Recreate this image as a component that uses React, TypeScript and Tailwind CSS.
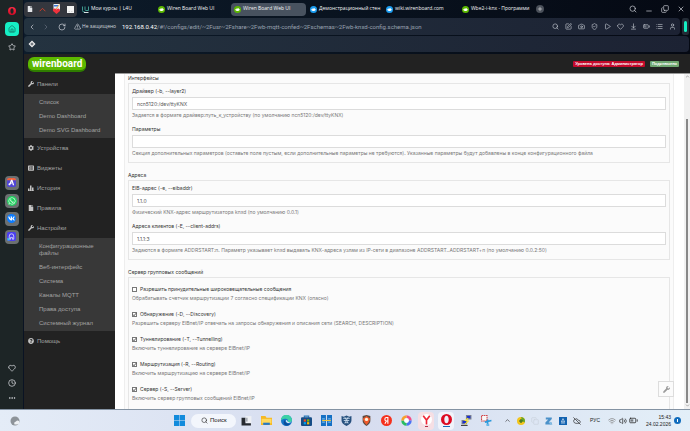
import type { ComponentType, ReactNode } from 'react';
import {
    ArrowDownToLine,
    BatteryMedium,
    Camera,
    ChevronDown,
    ChevronLeft,
    ChevronRight,
    ChevronUp,
    Clock4,
    CloudOff,
    Copy,
    Ellipsis,
    Heart,
    House,
    List,
    Minus,
    Play,
    Plus,
    RotateCw,
    Search,
    ShieldCheck,
    SquarePen,
    Star,
    TriangleAlert,
    User,
    Volume2,
    Wifi,
    X,
} from 'lucide-react';
import {
    FaCog,
    FaFile,
    FaListAlt,
    FaQuestionCircle,
    FaVk,
    FaWhatsapp,
    FaWrench,
} from 'react-icons/fa';
import clsx from 'clsx';

type Icon = ComponentType<{ className?: string }>;

/* ---------- Logos ---------- */

function BoardIcon({ color }: { color: string }) {
    return (
        <svg viewBox="0 0 14 14" className="size-[7px] shrink-0">
            <circle cx="7" cy="7" r="7" fill={color} />
            <path d="M2.5 6.5h2l1-2h1l1 1 1-1h1l.7 2h1.3v2H9.5v1.5h-5V8.500h-2z" fill="#fff" />
        </svg>
    );
}

function OperaIcon({ className }: { className?: string }) {
    return (
        <svg viewBox="0 0 20 20" className={className}>
            <defs>
                <linearGradient id="opera" x1="0" y1="0" x2="0" y2="1">
                    <stop offset="0" stopColor="#ff2b44" />
                    <stop offset="1" stopColor="#d00a24" />
                </linearGradient>
            </defs>
            <path
                fill="url(#opera)"
                fillRule="evenodd"
                d="M10 0a10 10 0 1 0 0 20a10 10 0 1 0 0-20zM10 3c2.500 0 4 3.200 4 7s-1.500 7-4 7-4-3.200-4-7 1.500-7 4-7z"
            />
        </svg>
    );
}

function CoursesIcon() {
    return (
        <svg viewBox="0 0 14 14" className="size-[7px] shrink-0">
            <path d="M1 1v8q0 3 3 3h2M6 1v6q0 2 2 2h5V1" fill="none" stroke="#3f9a90" strokeWidth="2" />
            <path d="M4 13h9" stroke="#d6e4e4" strokeWidth="2" />
        </svg>
    );
}

function PlayerIcon({ className }: { className?: string }) {
    return (
        <svg viewBox="0 0 20 20" className={className}>
            <rect width="20" height="20" rx="4" fill="#4a3df0" />
            <path d="M5 16V9a5 5 0 0 1 10 0v7h-3v-4H8v4z" fill="none" stroke="#fff" strokeWidth="1.500" />
            <path d="M1 13l5 2v4H1z" fill="#38c6ee" />
        </svg>
    );
}

function AriaIcon({ className }: { className?: string }) {
    return (
        <svg viewBox="0 0 20 20" className={className}>
            <rect width="20" height="20" rx="4" fill="#4f45d6" />
            <path d="M0 4q0-4 4-4h12q4 0 4 4v1H0z" fill="#f0643c" />
            <path d="M4 16l5-12h3l4 12h-3l-2.500-8-3.500 8z" fill="#fff" />
            <path d="M3 14l8-3" stroke="#fff" strokeWidth="2" />
        </svg>
    );
}

function BarsIcon({ className }: { className?: string }) {
    return (
        <svg viewBox="0 0 12 12" fill="currentColor" className={className}>
            <path d="M0 7h3v4H0zM4 1h3v10H4zM8 5h3v6H8zM0 11h12v1H0z" />
        </svg>
    );
}

/* ---------- Browser ---------- */

const messengers = [
    { name: 'Aria', node: <AriaIcon className="size-[9px]" /> },
    {
        name: 'WhatsApp',
        node: (
            <span className="grid size-[10px] place-items-center rounded-full bg-[#1fd05f] text-white">
                <FaWhatsapp className="size-2" />
            </span>
        ),
    },
    {
        name: 'VK',
        node: (
            <span className="grid size-[9px] place-items-center rounded-full bg-[#0a7cff] text-white">
                <FaVk className="size-[7px]" />
            </span>
        ),
    },
    { name: 'Плеер', node: <PlayerIcon className="size-[9px]" /> },
];

function Rail() {
    return (
        <nav aria-label="Боковая панель" className="flex w-[23px] shrink-0 flex-col items-center bg-[#1d2526] text-gray-200">
            <button aria-label="Opera" className="mt-[7px]">
                <OperaIcon className="size-2" />
            </button>
            <button aria-label="Рабочее пространство" className="mt-[7px] grid size-[14px] place-items-center rounded-sm bg-[#15efc4] text-[#125f55]">
                <House className="size-2" />
            </button>
            <button aria-label="Закладки" className="mt-[7px]">
                <Star className="size-2" />
            </button>
            <div className="my-auto flex flex-col gap-1 pt-1">
                {messengers.map((m) => (
                    <button key={m.name} aria-label={m.name} className="grid size-[14px] place-items-center rounded-sm bg-[#6b7071]">
                        {m.node}
                    </button>
                ))}
            </div>
            <div className="flex flex-col items-center gap-[7px] pb-[7px]">
                <button aria-label="Избранное"><Heart className="size-2" /></button>
                <button aria-label="История"><Clock4 className="size-2" /></button>
                <button aria-label="Ещё"><Ellipsis className="size-2" /></button>
            </div>
        </nav>
    );
}

const tabs = [
    { title: 'Мои курсы | L4U', icon: <CoursesIcon /> },
    { title: 'Wiren Board Web UI', icon: <BoardIcon color="#5cb800" /> },
    { title: 'Wiren Board Web UI', icon: <BoardIcon color="#5cb800" />, active: true },
    { title: 'Демонстрационный стен', icon: <BoardIcon color="#1b9df0" /> },
    { title: 'wiki.wirenboard.com', icon: <BoardIcon color="#1b9df0" /> },
    { title: 'Wbe2-i-knx - Программи', icon: <BoardIcon color="#5cb800" /> },
];

function PinnedTabs() {
    return (
        <div className="flex h-[15px] w-[53px] shrink-0 items-center justify-around rounded-sm bg-[#34373e]">
            <FaFile className="size-[6px] text-gray-200" />
            <svg viewBox="0 0 12 12" className="size-[7px]">
                <path d="M1 9l5-5 5 5" fill="none" stroke="#d8402a" strokeWidth="1.500" />
            </svg>
            <svg viewBox="0 0 18 24" className="h-3 w-[9px]">
                <rect x="3" y="2" width="13" height="13" fill="#e8eef8" />
                <path d="M4 4h8v3H4z" fill="#3c78d8" />
                <path d="M15 3l-7 9" stroke="#e8a33c" strokeWidth="2" />
                <path d="M9 22l-7-6q-1-5 3-5 3 0 4 2 1-2 4-2 4 1 3 5z" fill="#f0323c" />
            </svg>
            <svg viewBox="0 0 14 14" className="size-[7px]">
                <path d="M0 0h14v14H0z" fill="#f4f4f4" />
                <path d="M3 11h3M8 11h3" stroke="#b8b8b8" />
            </svg>
        </div>
    );
}

function TabStrip() {
    return (
        <div className="flex h-[18px] shrink-0 items-center gap-px">
            <PinnedTabs />
            <div className="ml-px flex gap-px" role="tablist">
                {tabs.map((tab, i) => (
                    <button
                        key={i}
                        role="tab"
                        aria-selected={!!tab.active}
                        className={clsx(
                            'flex h-[13px] w-[75px] items-center gap-[2px] rounded-sm pl-[3px] text-left text-[5px] text-gray-100',
                            tab.active && 'bg-[#48525f]'
                        )}
                    >
                        {tab.icon}
                        <span className="whitespace-nowrap">{tab.title}</span>
                    </button>
                ))}
            </div>
            <button aria-label="Новая вкладка" className="ml-px grid size-2 place-items-center rounded-full bg-[#4a505a] text-white">
                <Plus className="size-[6px]" />
            </button>
            <div className="ml-auto flex items-center gap-2 pr-1 text-gray-300">
                <button aria-label="Поиск"><Search className="size-2" /></button>
                <button aria-label="Свернуть" className="pt-1"><Minus className="size-2" /></button>
                <button aria-label="Восстановить"><Copy className="size-2 -scale-y-100" /></button>
                <button aria-label="Закрыть"><X className="size-2" /></button>
            </div>
        </div>
    );
}

const addressTools: { name: string; icon: Icon }[] = [
    { name: 'Масштаб', icon: Search },
    { name: 'Редактировать', icon: SquarePen },
    { name: 'Снимок', icon: Camera },
    { name: 'Блокировка рекламы', icon: ShieldCheck },
    { name: 'Отправить', icon: Play },
    { name: 'В избранное', icon: Heart },
    { name: 'Загрузки', icon: ArrowDownToLine },
    { name: 'Экономия энергии', icon: BatteryMedium },
    { name: 'Настройки', icon: List },
    { name: 'Профиль', icon: User },
];

function AddressBar() {
    return (
        <div className="flex h-[17px] shrink-0 gap-[2px]">
            <div className="flex min-w-0 flex-1 items-center rounded-sm bg-linear-to-r from-[#243340] to-[#1c2233] px-1 text-gray-300">
                <button aria-label="Назад"><ChevronLeft className="size-2" /></button>
                <button aria-label="Вперёд" className="ml-[6px] text-gray-500"><ChevronRight className="size-2" /></button>
                <button aria-label="Обновить" className="ml-2"><RotateCw className="size-2" /></button>
                <TriangleAlert className="ml-2 size-[7px] shrink-0" />
                <span className="ml-px w-[38px] shrink-0 whitespace-nowrap text-[5px]">Не защищено</span>
                <span className="ml-[2px] whitespace-nowrap font-['Roboto',sans-serif] text-[6px] text-gray-400">
                    <span className="text-white">192.168.0.42</span>
                    /#!/configs/edit/~2Fusr~2Fshare~2Fwb-mqtt-confed~2Fschemas~2Fwb-knxd-config.schema.json
                </span>
                <div className="ml-auto flex gap-[6px]">
                    {addressTools.map((tool) => (
                        <button key={tool.name} aria-label={tool.name}>
                            <tool.icon className="size-[7px]" />
                        </button>
                    ))}
                </div>
            </div>
            <div className="flex w-[7px] justify-center rounded-xs bg-[#232b36] py-[3px]">
                <span className="w-[3px] rounded-full bg-[#15efc4]" />
            </div>
        </div>
    );
}

/* ---------- Application ---------- */

function Submenu({ items }: { items: string[] }) {
    return (
        <ul className="bg-[#383838] py-px pl-[15px] text-[6px]">
            {items.map((item) => (
                <li key={item} className="pr-2">
                    <a href="#" className="block pt-1 pb-[3px] leading-[7px]">{item}</a>
                </li>
            ))}
        </ul>
    );
}

const menu: { name: string; icon: Icon; children?: ReactNode }[] = [
    {
        name: 'Панели',
        icon: FaWrench,
        children: (
            <Submenu items={['Список', 'Demo Dashboard', 'Demo SVG Dashboard']} />
        ),
    },
    { name: 'Устройства', icon: FaCog },
    { name: 'Виджеты', icon: FaListAlt },
    { name: 'История', icon: BarsIcon },
    { name: 'Правила', icon: FaFile },
    {
        name: 'Настройки',
        icon: FaWrench,
        children: (
            <Submenu
                items={[
                    'Конфигурационные файлы',
                    'Веб-интерфейс',
                    'Система',
                    'Каналы MQTT',
                    'Права доступа',
                    'Системный журнал',
                ]}
            />
        ),
    },
    { name: 'Помощь', icon: FaQuestionCircle },
];

function Sidebar() {
    return (
        <nav className="w-[91px] shrink-0 bg-[#222] text-[#a3a3a3]">
            {menu.map((item) => (
                <div key={item.name}>
                    <a href="#" className="flex h-5 items-center gap-[3px] pl-1 text-[6px]">
                        <item.icon className="size-[6px] text-[#c4c4c4]" />
                        {item.name}
                    </a>
                    {item.children}
                </div>
            ))}
        </nav>
    );
}

function Group({ title, children, className }: { title: string; children: ReactNode; className: string }) {
    return (
        <section>
            <h3 className="mb-px h-2 text-[#333]">{title}</h3>
            <div className={clsx('flex flex-col border border-[#e6e6e6] px-[3px]', className)}>{children}</div>
        </section>
    );
}

function TextField({ id, label, value, help }: { id: string; label: string; value: string; help: string }) {
    return (
        <div>
            <label htmlFor={id} className="block text-[#333]">{label}</label>
            <input
                id={id}
                defaultValue={value}
                className="mt-[2px] mb-px block h-[13px] w-full border border-[#dcdcdc] bg-white px-1 text-[#555]"
            />
            <p className="whitespace-nowrap text-[#777]">{help}</p>
        </div>
    );
}

function CheckField({ id, label, checked, help }: { id: string; label: string; checked?: boolean; help: string }) {
    return (
        <div>
            <div className="mb-px flex h-2 items-center gap-[3px]">
                <span className="grid size-[5px]">
                    <input
                        id={id}
                        type="checkbox"
                        defaultChecked={checked}
                        className="peer col-start-1 row-start-1 size-[5px] appearance-none border border-[#777] bg-white"
                    />
                    <svg viewBox="0 0 10 10" className="pointer-events-none col-start-1 row-start-1 hidden size-[5px] peer-checked:block">
                        <path d="M2 5l2 2.500L8 2.500" fill="none" stroke="#222" strokeWidth="1.500" />
                    </svg>
                </span>
                <label htmlFor={id} className="text-[#333]">{label}</label>
            </div>
            <p className="whitespace-nowrap text-[#777]">{help}</p>
        </div>
    );
}

const flags = [
    { id: 'force', label: 'Разрешить принудительные широковещательные сообщения', help: 'Обрабатывать счетчик маршрутизации 7 согласно спецификации KNX (опасно)' },
    { id: 'discovery', label: 'Обнаружение (-D, --Discovery)', checked: true, help: 'Разрешить серверу EIBnet/IP отвечать на запросы обнаружения и описания сети (SEARCH, DESCRIPTION)' },
    { id: 'tunnelling', label: 'Туннелирование (-T, --Tunnelling)', checked: true, help: 'Включить туннелирование на сервере EIBnet/IP' },
    { id: 'routing', label: 'Маршрутизация (-R, --Routing)', checked: true, help: 'Включить маршрутизацию на сервере EIBnet/IP' },
    { id: 'server', label: 'Сервер (-S, --Server)', checked: true, help: 'Включить сервер групповых сообщений EIBnet/IP' },
];

function ConfigForm() {
    return (
        <form className="ml-[9px] mr-[10px] flex min-w-0 flex-1 flex-col gap-2 border-x border-[#eee] bg-[#fbfbfb] px-[3px] font-['Inter',sans-serif] text-[5px] leading-[8px]">
            <Group title="Интерфейсы" className="gap-[6px] pt-[3px] pb-[5px]">
                <TextField
                    id="driver"
                    label="Драйвер (-b, --layer2)"
                    value="ncn5120:/dev/ttyKNX"
                    help="Задается в формате драйвер:путь_к_устройству (по умолчанию ncn5120:/dev/ttyKNX)"
                />
                <TextField
                    id="options"
                    label="Параметры"
                    value=""
                    help="Секция дополнительных параметров (оставьте поле пустым, если дополнительные параметры не требуются). Указанные параметры будут добавлены в конце конфигурационного файла"
                />
            </Group>
            <Group title="Адреса" className="gap-[6px] pt-[3px] pb-[5px]">
                <TextField
                    id="eibaddr"
                    label="EIB-адрес (-e, --eibaddr)"
                    value="1.1.0"
                    help="Физический KNX-адрес маршрутизатора knxd (по умолчанию 0.0.1)"
                />
                <TextField
                    id="clients"
                    label="Адреса клиентов (-E, --client-addrs)"
                    value="1.1.1:3"
                    help="Задаются в формате ADDRSTART:n. Параметр указывает knxd выдавать KNX-адреса узлам из IP-сети в диапазоне ADDRSTART..ADDRSTART+n (по умолчанию 0.0.2:50)"
                />
            </Group>
            <Group title="Сервер групповых сообщений" className="gap-2 pt-[7px] pb-2">
                {flags.map((flag) => (
                    <CheckField key={flag.id} {...flag} />
                ))}
            </Group>
        </form>
    );
}

function WebApp() {
    return (
        <div className="flex min-h-0 flex-1 flex-col bg-[#222]">
            <header className="flex h-5 shrink-0 items-center gap-[5px] pl-1 pr-[11px] text-[4px] font-bold text-white">
                <a href="#" className="mr-auto rounded-md border-b-2 border-[#2f7d00] bg-[#5cb800] px-1 font-['Roboto',sans-serif] text-[10px] leading-[13px]">
                    wirenboard
                </a>
                <span className="rounded-[1px] bg-[#c40a2c] px-[2px] leading-[6px]">Уровень доступа: Администратор</span>
                <span className="rounded-[1px] bg-[#6fa671] px-[2px] leading-[6px]">Подключено</span>
            </header>
            <div className="flex min-h-0 flex-1">
                <Sidebar />
                <main className="relative flex min-w-0 flex-1 overflow-hidden bg-white shadow-[0_-1px_0_#999]">
                    <ConfigForm />
                    <div className="flex w-[6px] flex-col items-center bg-[#f1f1f1] text-[#555]">
                        <ChevronUp className="size-[5px]" />
                        <div className="mt-10 w-[2px] flex-1 bg-[#888]" />
                        <ChevronDown className="mb-px size-[5px]" />
                    </div>
                    <button
                        type="button"
                        aria-label="Инструменты"
                        className="absolute right-4 bottom-3 grid size-4 place-items-center border border-[#ddd] bg-[#fbfbfb] text-[#999]"
                    >
                        <FaWrench className="size-[7px]" />
                    </button>
                </main>
            </div>
        </div>
    );
}

/* ---------- Windows taskbar ---------- */

const apps: { name: string; art: ReactNode; active?: boolean; running?: boolean }[] = [
    { name: 'Представление задач', art: <><path d="M8 2h11v13H8z" fill="#eef0f4" /><path d="M1 5h7v10h10v4H1z" fill="#262a30" /><path d="M8 5h4v7H8z" fill="#a8adb5" /></> },
    { name: 'Проводник', art: <><path d="M0 2h8l2 3h10v13H0z" fill="#f6b924" /><path d="M1 7h18v8H1z" fill="#ffd95e" /><path d="M4 14h12v4H4z" fill="#2478c8" /></> },
    { name: 'Edge', art: <><circle cx="10" cy="10" r="10" fill="#1575c8" /><path d="M0 10a10 10 0 0 1 20-1c0 4-5 5-8 3 2-3-1-6-5-5-4 0-6 3-7 3z" fill="#3bd0a6" /><path d="M8 9c-2 4 2 8 9 7-4 5-11 4-12-1-.500-3 1-6 3-6z" fill="#0c4c98" /><path d="M9 9q3 0 3 3 3 2 7 0-3 4-8 2-3-2-2-5z" fill="#dcecf6" /></> },
    { name: 'Microsoft Store', art: <><path d="M6 5V2h8v3" fill="none" stroke="#2878b8" strokeWidth="2" /><rect y="4" width="20" height="16" rx="2" fill="#164d86" /><path d="M5 8h4v4H5z" fill="#f25022" /><path d="M11 8h4v4h-4z" fill="#7fba00" /><path d="M5 13h4v4H5z" fill="#00a4ef" /><path d="M11 13h4v4h-4z" fill="#ffb900" /></> },
    { name: 'Total Commander', art: <><path d="M0 0h9v20H0zM11 0h9v20h-9z" fill="#1570c4" /><path d="M2 7h5M2 13h5M13 7h5M13 13h5" stroke="#70b6ec" strokeWidth="2" /><path d="M2 9h16v2H2z" fill="#f3c33c" /></> },
    { name: 'Щит', art: <><path d="M1 2l4 1 5-2 5 2 4-1v8q0 6-9 10Q1 16 1 10z" fill="#27507e" /><path d="M4 6h12M5 10h10M7 14h6M7 4l6 11M13 4L7 15" stroke="#cfe0f0" strokeWidth="1.500" fill="none" /></> },
    { name: 'Карты', art: <><path d="M3 2l7-2 7 2v9q0 5-7 9-7-4-7-9z" fill="#5c4a40" /><path d="M3 7l7-5 7 5-3 6-4 5-4-5z" fill="#ef5a2b" /><circle cx="10" cy="8" r="3" fill="#fff0d8" /></> },
    { name: 'Яндекс', art: <><circle cx="10" cy="10" r="10" fill="#f5311d" /><path d="M12.500 16V4.500H10q-3 0-3 3.200t3 3.200h2.500M10 11l-3 5" stroke="#fff" strokeWidth="2" fill="none" /></> },
    { name: 'Галерея', art: <><g fill="none" strokeWidth="5"><path d="M10 3a7 7 0 0 1 7 7" stroke="#f34b85" /><path d="M17 10a7 7 0 0 1-7 7" stroke="#4a72f5" /><path d="M10 17a7 7 0 0 1-7-7" stroke="#28bd62" /><path d="M3 10a7 7 0 0 1 7-7" stroke="#f7a12b" /></g><circle cx="10" cy="10" r="4" fill="#fff" /></> },
    { name: 'Яндекс Браузер', running: true, art: <><circle cx="10" cy="10" r="10" fill="#fff" /><path d="M4 3l6 8 6-8M10 10v9" fill="none" stroke="#ef2738" strokeWidth="3" /></> },
    { name: 'Opera', active: true, art: <path fill="#dd0b22" fillRule="evenodd" d="M10 0a10 10 0 1 0 0 20a10 10 0 1 0 0-20zM10 3c2.500 0 4 3.200 4 7s-1.500 7-4 7-4-3.200-4-7 1.500-7 4-7z" /> },
    { name: 'PuTTY', art: <><path d="M9 0h10v8H9zM1 9h10v8H1z" fill="#7a8190" /><path d="M11 2h6v4h-6zM3 11h6v4H3z" fill="#1b30d0" /><path d="M13 6l-5 4 5 1-6 6" fill="none" stroke="#f6e232" strokeWidth="2" /><path d="M0 18h12v2H0z" fill="#444" /></> },
    { name: 'Ножницы', art: <><path d="M1 1h10v10H1z" fill="#f8f8f8" stroke="#d2484c" strokeWidth="2" strokeDasharray="3 1" /><path d="M12 8v11M7 13l12-3" stroke="#2d9bdc" strokeWidth="3" /><path d="M10 16h5v4h-5z" fill="#67b7e8" /></> },
];

function Taskbar() {
    return (
        <footer className="flex h-[22px] shrink-0 items-center border-t border-[#8493a3] bg-linear-to-r from-[#e4ecf7] via-[#d6dcef] to-[#e3eff8] text-[5px] text-[#222]">
            <button aria-label="Погода" className="ml-[10px] mr-auto">
                <svg viewBox="0 0 20 20" className="size-[10px]">
                    <circle cx="10" cy="10" r="9" fill="#8d9399" />
                    <path d="M9 17q-2-5 3-6 2-3 6-1 2 6-3 7z" fill="#eef1f4" />
                </svg>
            </button>
            <div className="flex items-center">
                <button aria-label="Пуск" className="grid w-5 place-items-center">
                    <svg viewBox="0 0 22 22" className="size-[11px]">
                        <path d="M0 0h10.500v10.500H0zM11.500 0H22v10.500H11.500zM0 11.500h10.500V22H0zM11.500 11.500H22V22H11.500z" fill="#128bdc" />
                    </svg>
                </button>
                <button className="ml-[2px] flex h-[14px] w-[45px] items-center gap-[2px] rounded-full bg-[#f3f6fc] pl-[10px] text-[6px]">
                    <Search className="size-[7px]" />
                    Поиск
                </button>
                {apps.map((app) => (
                    <button
                        key={app.name}
                        aria-label={app.name}
                        className={clsx(
                            'mx-[2px] flex h-[18px] w-4 flex-col items-center justify-center gap-px rounded-sm',
                            app.active && 'bg-[#f0f3fa]',
                            app.running && 'bg-[#f6dfe4]'
                        )}
                    >
                        <svg viewBox="0 0 20 20" className="size-[11px]">{app.art}</svg>
                        {app.active && <span className="h-px w-[7px] bg-[#1769b8]" />}
                        {app.running && <span className="h-px w-[3px] bg-[#b43048]" />}
                    </button>
                ))}
            </div>
            <div className="ml-1 flex items-center">
                <button aria-label="Скрытые значки" className="grid w-[14px] place-items-center"><ChevronUp className="size-[7px]" /></button>
                <svg viewBox="0 0 20 20" className="mx-[3px] size-2">
                    <circle cx="10" cy="10" r="10" fill="#f3c51c" />
                    <path d="M10 0a10 10 0 0 1 9 14l-6-4z" fill="#63a52c" />
                    <path d="M10 5v10M5 10h10" stroke="#256c28" strokeWidth="3" />
                </svg>
                <Copy className="mx-[3px] size-2 text-[#c9d2dc]" />
                <svg viewBox="0 0 20 20" className="mx-[3px] size-2">
                    <path d="M2 1h15v4L9 14h8v5H1v-5l7-8H2z" fill="#4b91c9" />
                    <path d="M13 11l6 8h-8z" fill="#85bde4" />
                </svg>
                <svg viewBox="0 0 20 20" className="mx-[3px] size-2">
                    <path d="M0 0h20v20H0z" fill="#1262b0" />
                    <path d="M10 4l-4 8h8zM5 15h10" stroke="#fff" strokeWidth="1.500" fill="none" />
                </svg>
                <CloudOff className="mx-[3px] size-2" />
                <button className="w-[22px] text-center">РУС</button>
                <Wifi className="mx-[2px] size-2 text-[#777]" />
                <Volume2 className="mx-px size-2" />
                <BatteryMedium className="mx-px size-[9px]" />
            </div>
            <div className="w-8 text-right leading-[7px]">
                <p>15:43</p>
                <p>24.02.2026</p>
            </div>
            <span className="ml-[3px] mr-[9px] grid size-[7px] place-items-center rounded-full bg-[#0f6cbd]">
                <span className="h-[3px] w-px bg-white" />
            </span>
        </footer>
    );
}

export default function App() {
    return (
        <div className="flex h-screen flex-col overflow-hidden font-['Liberation_Sans',Arial,sans-serif]">
            <div className="flex min-h-0 flex-1 bg-[#0a1323]">
                <Rail />
                <div className="ml-px flex min-w-0 flex-1 flex-col">
                    <div className="flex flex-col bg-linear-to-r from-[#0d1c2b] to-[#050913] pr-px font-['Open_Sans',sans-serif]">
                        <TabStrip />
                        <AddressBar />
                        <div className="mt-px mb-[2px] flex h-4 items-center rounded-sm bg-linear-to-r from-[#243340] to-[#1c2233] pl-1">
                            <a href="#" aria-label="Закладка">
                                <svg viewBox="0 0 16 16" className="size-2">
                                    <path d="M8 1l7 7-7 7-7-7z" fill="#eee" />
                                    <path d="M8 5v6M5 8h6" stroke="#26323e" strokeWidth="1.500" />
                                </svg>
                            </a>
                        </div>
                    </div>
                    <WebApp />
                </div>
            </div>
            <Taskbar />
        </div>
    );
}
